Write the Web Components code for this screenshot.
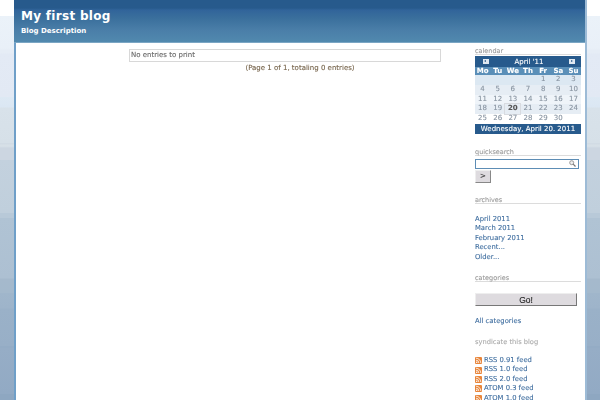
<!DOCTYPE html>
<html>
<head>
<meta charset="utf-8">
<title>My first blog</title>
<style>
    html, body { margin: 0; padding: 0; height: 100%; overflow: hidden; }
    body {
        font-family: "DejaVu Sans", sans-serif;
        font-size: 7px;
        -webkit-text-stroke: .1px;
        background: linear-gradient(to bottom,
            #ffffff 0, #ffffff 16px,
            #ebf2f9 16px, #e9f0f8 48px, #e6edf6 50px, #e6edf6 53px, #e3eaf5 54px, #e2e9f4 97px,
            #dde9f4 97px, #dbe7f3 107px,
            #d8e2ea 108px, #d6e0e8 143px, #d0dae3 143px, #d8e1e8 146px, #ccd6e1 148px, #ccd6e1 160px,
            #c3d1de 160px, #c0cfdc 213px, #b8c9d8 213px, #b8c9d8 218px,
            #b0c3d4 218px, #adc0d2 278px, #a5b9cc 279px, #a4b9cc 293px,
            #a0b6cb 293px, #9eb4ca 308px, #9ab1c8 309px, #98afc7 346px, #94acc5 346px, #94acc5 348px,
            #96adc6 348px, #92aac4 394px, #8ea7c1 394px);
    }
</style>
</head>
<body>
<blog-page>
    <blog-header slot="header" title="My first blog" description="Blog Description"></blog-header>
    <blog-entries slot="main"></blog-entries>
    <blog-sidebar slot="side">
        <side-box label="calendar"><blog-calendar></blog-calendar></side-box>
        <side-box label="quicksearch" style="margin-top:13px"><quick-search></quick-search></side-box>
        <side-box label="archives" style="margin-top:12px">
            <link-list style="margin-top:11px">
                <a>April 2011</a><a>March 2011</a><a>February 2011</a><a>Recent...</a><a>Older...</a>
            </link-list>
        </side-box>
        <side-box label="categories" style="margin-top:11px"><cat-form></cat-form></side-box>
        <side-box label="syndicate this blog" plain style="margin-top:11px">
            <link-list style="margin-top:11px">
                <feed-link>RSS 0.91 feed</feed-link>
                <feed-link>RSS 1.0 feed</feed-link>
                <feed-link>RSS 2.0 feed</feed-link>
                <feed-link>ATOM 0.3 feed</feed-link>
                <feed-link>ATOM 1.0 feed</feed-link>
            </link-list>
        </side-box>
    </blog-sidebar>
</blog-page>
<script>
class BlogPage extends HTMLElement {
    constructor () {
        super();
        this.attachShadow({ mode: 'open' }).innerHTML = `
            <style>
                :host { display: flex; flex-direction: column; width: 573px; height: 400px; margin-left: 14px; box-sizing: border-box;
                        background: #fff; border-right: 2px solid #9dbbd6; overflow: hidden; }
                .cols { display: flex; flex: 1; border-left: 2px solid #6f9fc8; }
                .blur { display: flex; filter: blur(.3px); }
                .main { width: 312px; margin-left: 113px; padding-top: 6px; }
                .side { width: 106px; margin-left: 34px; padding-top: 3px; }
            </style>
            <slot name="header"></slot>
            <div class="cols"><div class="blur">
                <div class="main"><slot name="main"></slot></div>
                <div class="side"><slot name="side"></slot></div>
            </div></div>`;
    }
}

class BlogHeader extends HTMLElement {
    constructor () {
        super();
        this.attachShadow({ mode: 'open' }).innerHTML = `
            <style>
                :host { display: block; height: 43px; box-sizing: border-box; padding: 9px 0 0 7px; color: #fff; flex: none;
                        background: linear-gradient(to bottom, #275a8c 0, #275a8c 8px, #31649a 10px, #3a6f9c 18px, #4a7ea8 30px, #5189ae 42px);
                        border-bottom: 1px solid #7ba6c4; font-weight: bold; -webkit-text-stroke: 0; }
                h1 { margin: 0; font-size: 12px; line-height: 14px; letter-spacing: .3px; }
                p { margin: 3px 0 0; font-size: 7px; line-height: 11px; }
            </style>
            <h1>${this.getAttribute('title')}</h1>
            <p>${this.getAttribute('description')}</p>`;
    }
}

class BlogEntries extends HTMLElement {
    constructor () {
        super();
        this.attachShadow({ mode: 'open' }).innerHTML = `
            <style>
                :host { display: block; font-size: 7px; }
                .box { border: 1px solid #d8d8d8; height: 11px; line-height: 11px; padding-left: 1px; color: #666; }
                .foot { text-align: center; color: #75634a; line-height: 12px; padding-left: 30px; }
            </style>
            <div class="box">No entries to print</div>
            <div class="foot">(Page 1 of 1, totaling 0 entries)</div>`;
    }
}

class BlogSidebar extends HTMLElement {
    constructor () {
        super();
        this.attachShadow({ mode: 'open' }).innerHTML = `
            <style>:host { display: block; }</style><slot></slot>`;
    }
}

class SideBox extends HTMLElement {
    constructor () {
        super();
        const plain = this.hasAttribute('plain');
        this.attachShadow({ mode: 'open' }).innerHTML = `
            <style>
                :host { display: block; }
                h3 { margin: 0; padding-top: 3px; font-size: 6.5px; line-height: 5px; font-weight: normal; color: #999;
                     ${plain ? 'font-size: 6.7px; color: #aaa;' : 'border-bottom: 1px solid #dcdcdc;'} }
            </style>
            <h3>${this.getAttribute('label')}</h3>
            <slot></slot>`;
    }
}

class BlogCalendar extends HTMLElement {
    constructor () {
        super();
        const days = ['Mo', 'Tu', 'We', 'Th', 'Fr', 'Sa', 'Su'];
        const weeks = [
            ['', '', '', '', '1', '2', '3'],
            ['4', '5', '6', '7', '8', '9', '10'],
            ['11', '12', '13', '14', '15', '16', '17'],
            ['18', '19', '20', '21', '22', '23', '24'],
            ['25', '26', '27', '28', '29', '30', '']
        ];
        const fills = ['#dce8f2', '#e6edf4', '#eff4f9', '#e6edf4', '#fff'];
        const row = (w, i) => `<div class="row" style="background:${fills[i]}">` +
            w.map(d => `<span class="${d === '20' ? 'today' : ''}">${d}</span>`).join('') + '</div>';
        this.attachShadow({ mode: 'open' }).innerHTML = `
            <style>
                :host { display: block; margin-top: 1px; font-size: 7px; text-align: center; color: #8793a0; }
                .top { display: flex; justify-content: space-between; align-items: center; height: 11px;
                       background: #275a8c; color: #fff; padding: 0 6px 0 8px; }
                .top b { font-weight: normal; font-size: 7px; }
                .arr { width: 6px; height: 5px; background: #dfe8f0; position: relative; }
                .arr::after { content: ''; position: absolute; left: 1px; top: 1px; border: 1.5px solid transparent; border-left: 0; border-right: 2px solid #275a8c; }
                .arr.next::after { border-right: 0; border-left: 2px solid #275a8c; left: 2px; }
                .row { display: grid; grid-template-columns: repeat(7, 1fr); height: 9.8px; line-height: 9.8px; }
                .head { height: 8px; line-height: 8px; background: #5a8fb8; color: #fff; font-weight: bold; }
                .today { font-weight: bold; color: #555; outline: 1px solid #d8dbe0; }
                .bot { height: 10px; line-height: 10px; background: #275a8c; color: #fff; white-space: nowrap; }
            </style>
            <div class="top"><span class="arr"></span><b>April '11</b><span class="arr next"></span></div>
            <div class="row head">${days.map(d => `<span>${d}</span>`).join('')}</div>
            ${weeks.map(row).join('')}
            <div class="bot">Wednesday, April 20. 2011</div>`;
    }
}

class QuickSearch extends HTMLElement {
    constructor () {
        super();
        this.attachShadow({ mode: 'open' }).innerHTML = `
            <style>
                :host { display: block; margin-top: 3px; }
                .field { height: 8px; border: 1px solid #5d8db5; background: #fff; display: flex; justify-content: flex-end; align-items: center; padding-right: 2px; margin-right: 2px; }
                button { display: block; width: 16px; height: 13px; padding: 0; margin-top: 1px; font: 7px "DejaVu Sans", sans-serif; color: #333;
                         background: #dedbdf; border: 1px solid; border-color: #eee #888 #888 #eee; }
            </style>
            <div class="field">
                <svg width="7" height="7" viewBox="0 0 7 7"><circle cx="2.7" cy="2.7" r="2" fill="#eee" stroke="#999"/><path d="M4.2 4.2L6.5 6.5" stroke="#777" stroke-width="1.2"/></svg>
            </div>
            <button>&gt;</button>`;
    }
}

class CatForm extends HTMLElement {
    constructor () {
        super();
        this.attachShadow({ mode: 'open' }).innerHTML = `
            <style>
                :host { display: block; margin-top: 11px; }
                button { display: block; width: 102px; height: 13px; padding: 0; font: 8.5px "Liberation Sans", sans-serif; color: #222;
                         background: #dedbdf; border: 1px solid; border-color: #eee #777 #777 #eee; }
                a { display: block; margin-top: 10px; line-height: 10px; color: #3d6c9e; font-size: 6.8px; }
            </style>
            <button>Go!</button>
            <a>All categories</a>`;
    }
}

class LinkList extends HTMLElement {
    constructor () {
        super();
        this.attachShadow({ mode: 'open' }).innerHTML = `
            <style>
                :host { display: block; color: #3d6c9e; font-size: 6.8px; line-height: 9.4px; }
                ::slotted(a) { display: block; }
            </style>
            <slot></slot>`;
    }
}

class FeedLink extends HTMLElement {
    constructor () {
        super();
        this.attachShadow({ mode: 'open' }).innerHTML = `
            <style>
                :host { display: flex; align-items: center; gap: 2px; height: 9.4px; }
                svg { flex: none; }
            </style>
            <svg width="7" height="7" viewBox="0 0 7 7">
                <rect width="7" height="7" rx="1" fill="#e8853a"/>
                <circle cx="1.7" cy="5.3" r=".8" fill="#fff"/>
                <path d="M1 3.2a2.8 2.8 0 0 1 2.8 2.8M1 1.2a4.8 4.8 0 0 1 4.8 4.8" fill="none" stroke="#fff" stroke-width=".8"/>
            </svg>
            <span><slot></slot></span>`;
    }
}

customElements.define('blog-page', BlogPage);
customElements.define('blog-header', BlogHeader);
customElements.define('blog-entries', BlogEntries);
customElements.define('blog-sidebar', BlogSidebar);
customElements.define('side-box', SideBox);
customElements.define('blog-calendar', BlogCalendar);
customElements.define('quick-search', QuickSearch);
customElements.define('cat-form', CatForm);
customElements.define('link-list', LinkList);
customElements.define('feed-link', FeedLink);
</script>
</body>
</html>
